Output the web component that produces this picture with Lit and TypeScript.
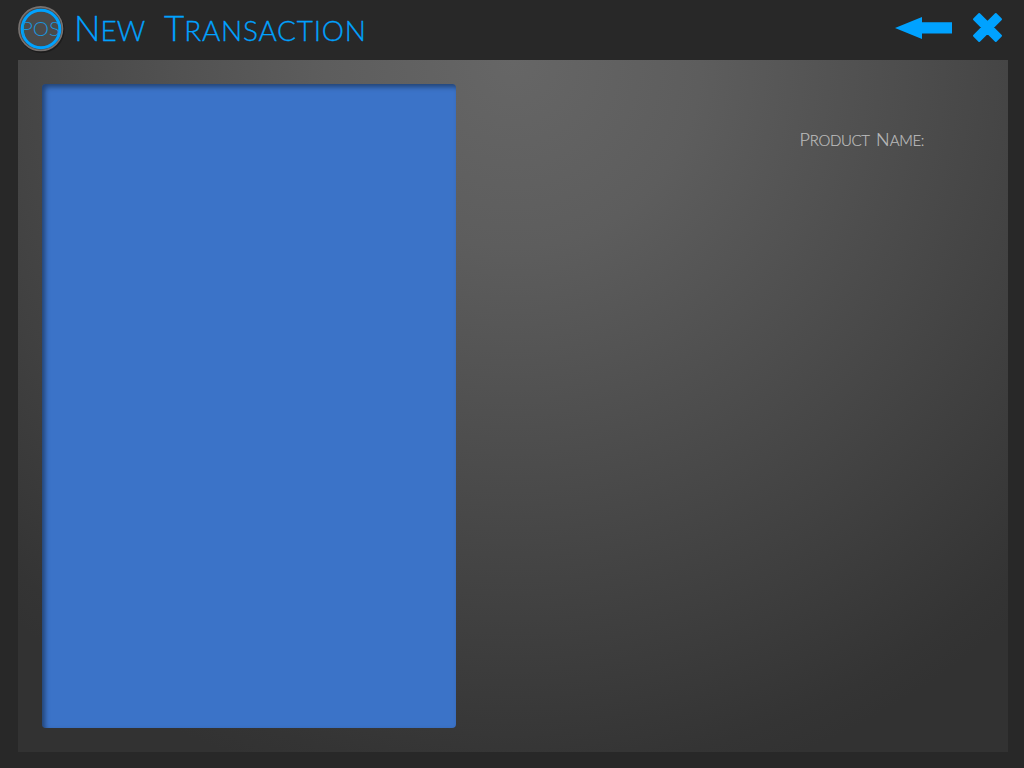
import { LitElement, html, css } from "lit";
import { customElement } from "lit/decorators.js";

@customElement("app-root")
export class AppRoot extends LitElement {
  static styles = css`
    :host {
      display: grid;
      grid-template-rows: 60px 692px;
      box-sizing: border-box;
      width: 1024px;
      height: 768px;
      padding: 0 16px 16px 18px;
      overflow: hidden;
      background: #282828;
      font-family: Lato, "Open Sans", sans-serif;
      font-weight: 300;
    }
    header {
      display: flex;
      align-items: flex-start;
    }
    .logo {
      flex: none;
      width: 48px;
      height: 48px;
      margin: 5px 0 0 -1px;
    }
    .logo text {
      font-family: Lato, sans-serif;
      font-weight: 300;
      font-size: 20px;
      fill: #1c94dc;
    }
    h1 {
      display: flex;
      align-items: baseline;
      margin: 5px 0 0 9px;
      font-size: 35px;
      line-height: 44px;
      font-weight: 300;
      color: #00a2ff;
      -webkit-text-stroke: 0.3px #00a2ff;
      white-space: nowrap;
    }
    .small {
      font-size: 28px;
      text-transform: uppercase;
    }
    .first {
      width: 90px;
    }
    .second .small {
      letter-spacing: 0.75px;
    }
    .tools {
      display: flex;
      margin-left: auto;
    }
    .tools svg {
      display: block;
    }
    .arrow {
      margin: 16px 20px 0 0;
    }
    .close {
      margin: 12px 5px 0 0;
    }
    main {
      display: flex;
      justify-content: space-between;
      align-items: flex-start;
      box-sizing: border-box;
      padding: 24px 84px 24px 24px;
      background: radial-gradient(circle 750px at 50% 0, #666 0%, #5d5d5d 25%, #343434 95%, #323232 100%);
    }
    .list {
      width: 414px;
      height: 644px;
      border-radius: 4px;
      background: #3b73c8;
      box-shadow: inset 3px 3px 5px rgba(0, 0, 0, 0.42);
    }
    .name {
      margin-top: 43px;
      font-size: 18px;
      line-height: 24px;
      color: #bdbdbd;
      -webkit-text-stroke: 0.2px #bdbdbd;
      white-space: nowrap;
      word-spacing: 1.5px;
    }
    .name .small {
      font-size: 15px;
      letter-spacing: -0.36px;
    }
  `;

  render() {
    return html`
      <header>
        <svg class="logo" viewBox="0 0 48 48">
          <circle cx="24.5" cy="25" r="23" fill="#1c1c1c" />
          <circle cx="23.7" cy="23.7" r="21.8" fill="#4a4a4a" stroke="#777270" stroke-width="1.6" />
          <circle cx="24" cy="24" r="18.8" fill="none" stroke="#00a2ff" stroke-width="3" />
          <text x="4" y="30.5" textLength="39" lengthAdjust="spacingAndGlyphs">POS</text>
        </svg>
        <h1>
          <span class="first">N<span class="small">ew</span></span>
          <span class="second">T<span class="small">ransaction</span></span>
        </h1>
        <div class="tools">
          <svg class="arrow" width="58" height="24" viewBox="0 0 58 24">
            <path d="M1 12 28 1V6.3H58V17.5H28V23Z" fill="#00a2ff" />
          </svg>
          <svg class="close" width="31" height="31" viewBox="0 0 31 31">
            <path d="M7.2 2 15.5 10.2 23.8 2 29 7.2 20.8 15.5 29 23.8 23.8 29 15.5 20.8 7.2 29 2 23.8 10.2 15.5 2 7.2Z" fill="#00a2ff" stroke="#00a2ff" stroke-width="2" stroke-linejoin="round" />
          </svg>
        </div>
      </header>
      <main>
        <section class="list"></section>
        <div class="name">P<span class="small">roduct</span> N<span class="small">ame:</span></div>
      </main>
    `;
  }
}
